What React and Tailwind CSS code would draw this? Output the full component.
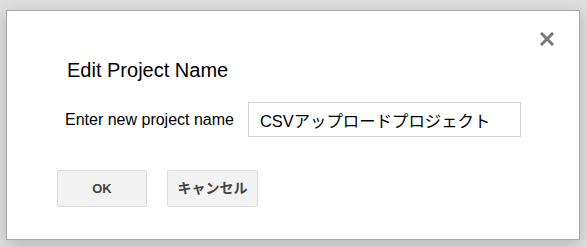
export default function App() {
  return (
    <div
      className="min-h-screen w-full bg-[#dedede] pl-[6px] pt-[10px]"
      style={{ fontFamily: '"Liberation Sans", Arial, "Noto Sans CJK JP", sans-serif' }}
    >
      <div className="relative h-[230px] w-[574px] border border-[#a9a9a9] bg-white shadow-[0_4px_14px_rgba(0,0,0,0.18)]">
        <button className="absolute left-[533px] top-[21px] flex h-[14px] w-[14px] items-center justify-center">
          <svg width="14" height="14" viewBox="0 0 14 14">
            <path d="M2 2 L12 12 M12 2 L2 12" stroke="#7a7a7a" strokeWidth="3" strokeLinecap="square" />
          </svg>
        </button>

        <div className="pl-[50px] pt-[47px]">
          <h2 className="ml-[10px] text-[20px] leading-[24px] text-black">Edit Project Name</h2>

          <div className="mt-[20px] flex items-center">
            <label className="ml-[8px] text-[16px] leading-[20px] text-black">Enter new project name</label>
            <input
              className="ml-[14px] h-[35px] w-[273px] border border-[#d2d2d2] px-[11px] text-[16.4px] text-black outline-none"
              defaultValue="CSVアップロードプロジェクト"
            />
          </div>

          <div className="mt-[33px] flex gap-[20px]">
            <button className="h-[37px] w-[90px] rounded-[2px] border border-[#dcdcdc] bg-[#f2f2f2] text-[13px] font-bold text-[#444]">
              OK
            </button>
            <button className="h-[37px] w-[91px] rounded-[2px] border border-[#dcdcdc] bg-[#f2f2f2] text-[14px] font-bold text-[#444]">
              キャンセル
            </button>
          </div>
        </div>
      </div>
    </div>
  );
}
